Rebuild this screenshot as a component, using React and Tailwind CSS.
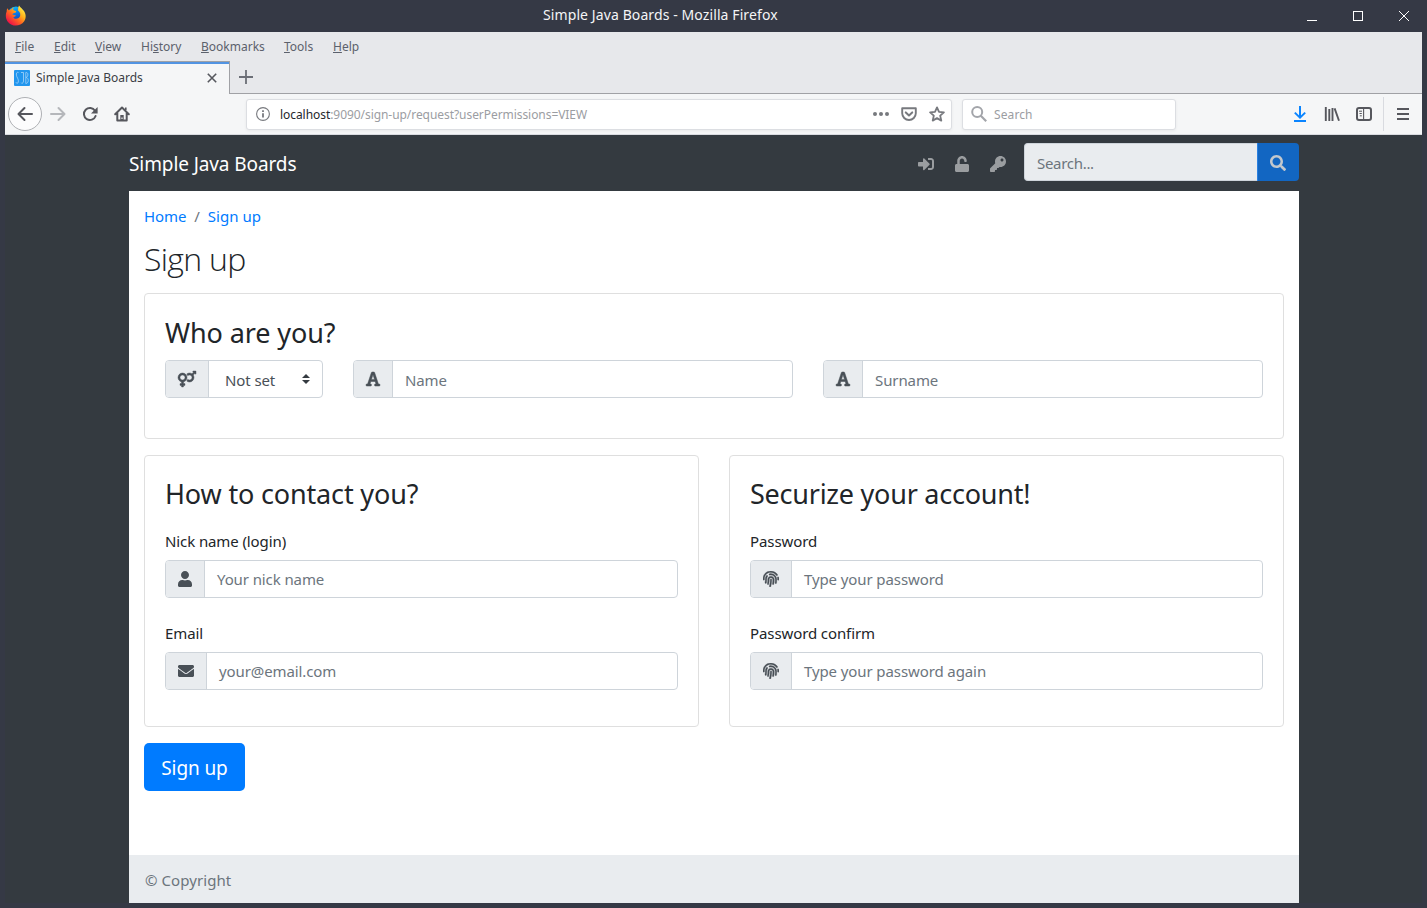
import React from 'react';
import {
  FaSignInAlt,
  FaUnlock,
  FaKey,
  FaSearch,
  FaVenusMars,
  FaUser,
  FaEnvelope,
  FaFingerprint,
} from 'react-icons/fa';

function FirefoxLogo() {
  return (
    <svg width="22" height="22" viewBox="0 0 22 22">
      <defs>
        <linearGradient id="fox" x1="0.9" y1="0.1" x2="0.2" y2="0.9">
          <stop offset="0" stopColor="#fff44f" />
          <stop offset="0.35" stopColor="#ffb21a" />
          <stop offset="0.6" stopColor="#ff6a1f" />
          <stop offset="1" stopColor="#ef1247" />
        </linearGradient>
        <linearGradient id="globe" x1="0.3" y1="0" x2="0.6" y2="1">
          <stop offset="0" stopColor="#10c0fa" />
          <stop offset="0.5" stopColor="#0a6ee0" />
          <stop offset="1" stopColor="#1a2c9c" />
        </linearGradient>
      </defs>
      <circle cx="11" cy="10" r="8.6" fill="url(#globe)" />
      <path
        d="M2.2 3.2 4 5.4C4.8 4.6 5.7 4.2 6.5 4.2L8.4 2 8.2 4.9 11.2 6.3 10.8 7.6 8 8.4 7.4 9.8C8.8 9.6 9.6 10.6 11 10.4 10.4 11.8 8.6 11.4 8.4 12.4 9.4 14.6 14.6 14 15.2 10.4 15.6 7.8 14 6.6 13 5.6 13 3.6 13.4 1.6 14 .4 15.4 2.8 17.6 3.8 19 6 21 9 21.4 13 19.2 16.2 15.4 21.6 7.4 22 3.2 17.2.4 14 .4 9.6 1.6 6.8 1.6 5.4 1.8 4.2 2.2 3.2Z"
        fill="url(#fox)"
      />
    </svg>
  );
}

function FontIcon({ className }) {
  return (
    <svg className={className} viewBox="0 0 448 512" fill="currentColor" stroke="currentColor">
      <path d="M152 416h-24.013l26.586-80.782H292.8L319.386 416H296c-13.255 0-24 10.745-24 24v16c0 13.255 10.745 24 24 24h128c13.255 0 24-10.745 24-24v-16c0-13.255-10.745-24-24-24h-26.739L275.495 48.211A24 24 0 0 0 252.792 32h-57.583a24 24 0 0 0-22.703 16.211L50.74 416H24c-13.255 0-24 10.745-24 24v16c0 13.255 10.745 24 24 24h128c13.255 0 24-10.745 24-24v-16c0-13.255-10.745-24-24-24zm64.353-271.778c4.348-15.216 6.61-28.156 7.586-34.644.839 6.521 2.939 19.476 7.727 34.706l41.335 124.006h-98.619z" />
    </svg>
  );
}

function TitleBar() {
  return (
    <div className="relative flex h-8 w-full shrink-0 items-center justify-between bg-[#353945]">
      <div className="pl-[5px]">
        <FirefoxLogo />
      </div>
      <div className="absolute left-[543px] top-[5px] whitespace-nowrap text-[14px] leading-[20px] tracking-[0.1px] text-[#f4f5f7]">
        Simple Java Boards - Mozilla Firefox
      </div>
      <div className="flex items-center gap-[36px] pr-[18px] text-white">
        <svg width="10" height="10" viewBox="0 0 10 10" shapeRendering="crispEdges">
          <path d="M0 9.5h10" stroke="currentColor" />
        </svg>
        <svg width="10" height="10" viewBox="0 0 10 10" shapeRendering="crispEdges">
          <path d="M.5.5h9v9h-9z" fill="none" stroke="currentColor" />
        </svg>
        <svg width="10" height="10" viewBox="0 0 10 10">
          <path d="M0 0l10 10M10 0L0 10" stroke="currentColor" />
        </svg>
      </div>
    </div>
  );
}

const MENUS = [
  ['', 'F', 'ile', 'w-[39px]'],
  ['', 'E', 'dit', 'w-[41px]'],
  ['', 'V', 'iew', 'w-[46px]'],
  ['Hi', 's', 'tory', 'w-[60px]'],
  ['', 'B', 'ookmarks', 'w-[83px]'],
  ['', 'T', 'ools', 'w-[49px]'],
  ['', 'H', 'elp', 'w-[40px]'],
];

function MenuBar() {
  return (
    <div className="flex h-[29px] items-center bg-[#e7e8eb] pl-[10px] text-[12px] leading-[16px] text-[#5c616c]">
      {MENUS.map(([before, key, after, width]) => (
        <div key={key + after} className={width}>
          {before}
          <span className="underline underline-offset-1">{key}</span>
          {after}
        </div>
      ))}
    </div>
  );
}

function TabStrip() {
  return (
    <div className="flex h-[33px] bg-[#e7e8eb]">
      <div className="flex w-[225px] items-center border-r border-t border-[#a0a1a5] bg-[#f5f6f7]">
        <div className="flex h-full w-full items-center border-t-2 border-[#5294e2] pb-[3px] pl-[9px]">
          <svg width="16" height="16" viewBox="0 0 16 16">
            <rect width="16" height="16" rx="1" fill="#2196ee" />
            <path
              d="M4.5 2.6C2.6 1.4 1.8 4 2.8 6.6 4 9 4.8 10.4 4.2 12.2 3.6 14 2.4 13.4 2 12.4M7 2.5h2.5v8.5c0 2-1.6 3-2.3 1.8M11.8 13.5v-11c2.6-.6 2.8 4 .4 5 3 .4 2.6 6-.4 6"
              fill="none"
              stroke="#a8d4f8"
              strokeWidth=".8"
            />
          </svg>
          <span className="ml-[6px] flex-1 whitespace-nowrap text-[12px] leading-[16px] text-[#3b3e45]">
            Simple Java Boards
          </span>
          <svg className="mr-[12px]" width="10" height="10" viewBox="0 0 10 10">
            <path d="M.8.8l8.4 8.4M9.2.8L.8 9.2" stroke="#56585e" strokeWidth="1.6" />
          </svg>
        </div>
      </div>
      <div className="flex flex-1 items-center border-b border-[#a0a1a5] pl-[9px]">
        <svg width="14" height="14" viewBox="0 0 14 14">
          <path d="M7 0v14M0 7h14" stroke="#6b6e76" strokeWidth="1.8" />
        </svg>
      </div>
    </div>
  );
}

function NavIcon({ children, className = '', color = '#56575d' }) {
  return (
    <svg
      className={className}
      width="16"
      height="16"
      viewBox="0 0 16 16"
      fill="none"
      stroke={color}
      strokeWidth="2"
    >
      {children}
    </svg>
  );
}

function Toolbar() {
  return (
    <div className="flex h-[41px] items-center border-b border-[#d9dbe0] bg-[#f5f6f7]">
      <div className="ml-[3px] flex h-[34px] w-[34px] items-center justify-center rounded-full border border-[#aeb0b4] bg-[#fcfcfd]">
        <NavIcon>
          <path d="M15 8H1.8M7.5 2L1.5 8l6 6" strokeLinecap="round" strokeLinejoin="round" />
        </NavIcon>
      </div>
      <NavIcon className="ml-[8px]" color="#b5b7bb">
        <path d="M1 8h13.2M8.5 2l6 6-6 6" strokeLinecap="round" strokeLinejoin="round" />
      </NavIcon>
      <NavIcon className="ml-[16px]">
        <path d="M13 4.8A6 6 0 1 0 13.6 10" strokeLinecap="round" />
        <path d="M15.6 1v6.5H9z" fill="#56575d" stroke="none" />
      </NavIcon>
      <NavIcon className="ml-[16px]">
        <path
          d="M1.2 8.2L8 1.5l6.8 6.7M3.3 7v7.6h9.4V7"
          strokeLinecap="round"
          strokeLinejoin="round"
        />
        <path d="M11.8 4V1.6" strokeWidth="1.6" />
        <path d="M6.3 15V9h3.4v6z" fill="#56575d" stroke="none" />
        <path d="M8 11.5v1.5" stroke="#f5f6f7" strokeWidth="1.2" />
      </NavIcon>
      <div className="ml-[116px] flex h-[31px] w-[706px] items-center rounded-[3px] border border-[#dcdee2] bg-white shadow-[0_1px_3px_rgba(0,0,0,0.06)]">
        <svg className="ml-[9px]" width="14" height="14" viewBox="0 0 14 14" fill="none" stroke="#77797e">
          <circle cx="7" cy="7" r="6.4" strokeWidth="1.1" />
          <path d="M7 6.2v4.4M7 3.2v1.8" strokeWidth="1.8" />
        </svg>
        <span className="ml-[10px] flex-1 whitespace-nowrap pt-[2px] text-[12px] leading-[16px] tracking-[-0.06px] text-[#9b9da2]">
          <span className="text-[#25272c]">localhost</span>:9090/sign-up/request?userPermissions=VIEW
        </span>
        <svg width="16" height="4" viewBox="0 0 16 4" fill="#77797e">
          <circle cx="2" cy="2" r="2" />
          <circle cx="8" cy="2" r="2" />
          <circle cx="14" cy="2" r="2" />
        </svg>
        <NavIcon className="ml-[12px]" color="#77797e">
          <path d="M1.2 2.2h13.6v5a6.8 6.8 0 0 1-13.6 0z" strokeWidth="1.9" strokeLinejoin="round" />
          <path d="M4.8 6.4L8 9.4l3.2-3" strokeLinecap="round" strokeLinejoin="round" />
        </NavIcon>
        <NavIcon className="ml-[12px] mr-[6px]" color="#77797e">
          <path
            d="M8 1.4l2 4.5 4.9.5-3.7 3.3 1.1 4.9L8 12.1l-4.3 2.5 1.1-4.9L1.1 6.4 6 5.9z"
            strokeWidth="1.8"
            strokeLinejoin="round"
          />
        </NavIcon>
      </div>
      <div className="ml-[10px] flex h-[31px] w-[214px] items-center rounded-[3px] border border-[#dcdee2] bg-white shadow-[0_1px_3px_rgba(0,0,0,0.06)]">
        <NavIcon className="ml-[8px]" color="#a3a5aa">
          <circle cx="6.2" cy="6" r="5" />
          <path d="M9.8 9.8l5.4 5.4" strokeWidth="2.2" />
        </NavIcon>
        <span className="ml-[7px] pt-[2px] text-[12px] leading-[16px] tracking-[0.1px] text-[#9b9da2]">Search</span>
      </div>
      <div className="flex flex-1 items-center justify-end">
        <NavIcon color="#0a84ff">
          <path d="M8 0v11M2.8 6.6L8 11.6l5.2-5M2 15h12" strokeLinecap="butt" />
        </NavIcon>
        <NavIcon className="ml-[16px]">
          <path d="M1.8 1v14M5.3 3v12M8.5 2v13M10.6 2.4L15 14.8" strokeWidth="1.9" />
        </NavIcon>
        <NavIcon className="ml-[16px]">
          <rect x="1" y="2" width="14" height="12" rx="2" />
          <path d="M7.6 2v12" strokeWidth="1.1" />
          <path d="M3 5.2h3M3.5 7.5h2.3M3.8 9.8h2" strokeWidth="1" />
        </NavIcon>
        <div className="ml-[11px] h-[34px] w-px bg-[#d9dbe0]" />
        <svg className="ml-[13px] mr-[13px]" width="12" height="12" viewBox="0 0 12 12">
          <path d="M0 1h12M0 6h12M0 11h12" stroke="#56575d" strokeWidth="2" />
        </svg>
      </div>
    </div>
  );
}

function Group({ icon: Icon, iconClass, placeholder, className = '', textClass = 'pt-[6px]' }) {
  return (
    <div
      className={`flex h-[38px] overflow-hidden rounded-[4px] border border-[#ced4da] bg-white text-[#6c757d] ${className}`}
    >
      <div className="flex items-center border-r border-[#ced4da] bg-[#e9ecef] px-3 text-[#495057]">
        <Icon className={iconClass} />
      </div>
      <div className={`flex-1 whitespace-nowrap pl-3 leading-6 ${textClass}`}>{placeholder}</div>
    </div>
  );
}

function SiteHeader() {
  return (
    <div className="flex h-[56px] items-start pt-2">
      <div className="flex-1 whitespace-nowrap pt-[6px] text-[19px] leading-[30px] tracking-[-0.1px] text-white">
        Simple Java Boards
      </div>
      <div className="flex h-[38px] items-center text-[#9a9da0]">
        <FaSignInAlt className="mr-[21px] mt-[3px] h-4 w-4" />
        <FaUnlock className="mr-[21px] mt-[3px] h-4 w-[14px]" />
        <FaKey className="mr-[18px] mt-[3px] h-4 w-4" />
        <div className="flex h-[38px] w-[275px]">
          <div className="flex-1 rounded-l-[4px] border border-r-0 border-[#ced4da] bg-[#e9ecef] pl-3 pt-[7px] text-[15px] leading-6 tracking-[-0.3px] text-[#6c757d]">
            Search...
          </div>
          <div className="flex w-[42px] items-center justify-center rounded-r-[4px] border-l border-[#2a80e0] bg-[#1266c2] pr-px pt-[2px] text-[#c3c8cd]">
            <FaSearch className="h-4 w-4" />
          </div>
        </div>
      </div>
    </div>
  );
}

function Page() {
  return (
    <div className="flex h-[712px] flex-col bg-white font-['Noto_Sans','Open_Sans',sans-serif] text-[15px] tracking-[-0.1px]">
      <div className="flex-1 px-[15px] pt-[13px]">
        <div className="flex leading-6">
          <span className="text-[#007bff]">Home</span>
          <span className="px-2 text-[#6c757d]">/</span>
          <span className="tracking-[0.05px] text-[#007bff]">Sign up</span>
        </div>
        <h1 className="mt-[10px] h-[42px] font-['Open_Sans',sans-serif] text-[32px] font-light leading-[42px] tracking-[-0.7px] text-[#212529]">
          Sign up
        </h1>
        <section className="mt-[13px] h-[146px] rounded-[4px] border border-[#dfdfdf] px-5 pt-[22px]">
          <h2 className="text-[27px] leading-[34px] text-[#212529]">Who are you?</h2>
          <div className="mt-[10px] flex gap-[30px]">
            <div className="flex h-[38px] w-[158px] overflow-hidden rounded-[4px] border border-[#ced4da]">
              <div className="flex items-center border-r border-[#ced4da] bg-[#e9ecef] px-3 text-[#495057]">
                <FaVenusMars className="h-4 w-[18px] overflow-visible stroke-[14]" />
              </div>
              <div className="flex flex-1 items-start justify-between pl-4 pr-[12px] pt-[7px] leading-6 text-[#495057]">
                <span>Not set</span>
                <svg className="mt-[6px]" width="8" height="10" viewBox="0 0 4 5">
                  <path fill="#343a40" d="M2 0L0 2h4zm0 5L0 3h4z" />
                </svg>
              </div>
            </div>
            <Group icon={FontIcon} iconClass="h-4 w-[14px] overflow-visible stroke-[16]" placeholder="Name" className="flex-1" textClass="pt-[7px]" />
            <Group icon={FontIcon} iconClass="h-4 w-[14px] overflow-visible stroke-[16]" placeholder="Surname" className="flex-1" textClass="pt-[7px]" />
          </div>
        </section>
        <div className="mt-4 flex gap-[30px]">
          <section className="h-[272px] flex-1 rounded-[4px] border border-[#dfdfdf] px-5 pt-[21px] text-[#212529]">
            <h2 className="text-[27px] leading-[34px] tracking-[-0.16px]">How to contact you?</h2>
            <div className="mt-[18px] leading-6">Nick name (login)</div>
            <Group icon={FaUser} iconClass="h-4 w-[14px]" placeholder="Your nick name" className="mt-[7px]" />
            <div className="mt-[23px] leading-6">Email</div>
            <Group icon={FaEnvelope} iconClass="h-4 w-4" placeholder="your@email.com" className="mt-[7px]" />
          </section>
          <section className="h-[272px] flex-1 rounded-[4px] border border-[#dfdfdf] px-5 pt-[21px] text-[#212529]">
            <h2 className="text-[27px] leading-[34px] tracking-[-0.24px]">Securize your account!</h2>
            <div className="mt-[18px] leading-6">Password</div>
            <Group icon={FaFingerprint} iconClass="h-4 w-4 stroke-[10]" placeholder="Type your password" className="mt-[7px]" />
            <div className="mt-[23px] leading-6">Password confirm</div>
            <Group icon={FaFingerprint} iconClass="h-4 w-4 stroke-[10]" placeholder="Type your password again" className="mt-[7px]" />
          </section>
        </div>
        <div className="mt-4 flex h-12 w-[101px] items-center justify-center rounded-[5px] bg-[#007bff] pt-[2px] text-[19px] leading-[30px] text-white">
          Sign up
        </div>
      </div>
      <div className="h-12 bg-[#e9ecef] pl-[16px] pt-[13px] leading-6 tracking-[0.07px] text-[#6c757d]">© Copyright</div>
    </div>
  );
}

export default function App() {
  return (
    <div className="flex h-[908px] w-[1427px] flex-col overflow-hidden bg-[#353945] font-['Noto_Sans',sans-serif]">
      <TitleBar />
      <div className="mx-[5px]">
        <MenuBar />
        <TabStrip />
        <Toolbar />
        <div className="h-[768px] bg-[#343a40] pl-[124px] pr-[123px]">
          <SiteHeader />
          <Page />
        </div>
      </div>
    </div>
  );
}
